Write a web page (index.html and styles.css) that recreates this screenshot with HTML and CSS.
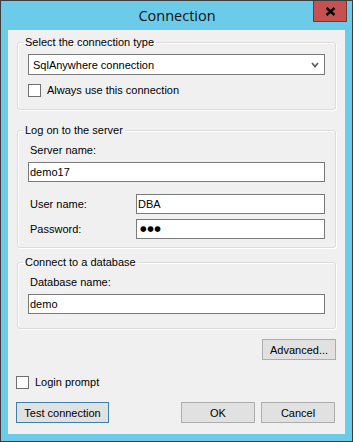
FILE: index.html
```html
<!DOCTYPE html>
<html>
<head>
<meta charset="utf-8">
<link rel="stylesheet" href="styles.css">
</head>
<body>
<div class="window">
  <div class="titlebar">
    <span></span>
    <div class="title">Connection</div>
    <div class="close"><svg width="11" height="9" viewBox="0 0 11 9"><path d="M1.5 1 L9.5 8 M9.5 1 L1.5 8" stroke="#000" stroke-width="2.4" fill="none"/></svg></div>
  </div>
  <div class="client">
    <fieldset class="group g1">
      <legend>Select the connection type</legend>
      <div class="combo">
        <span>SqlAnywhere connection</span>
        <svg class="chev" width="8" height="6" viewBox="0 0 8 6"><path d="M1 1 L4 4.5 L7 1" stroke="#606060" stroke-width="1.8" fill="none"/></svg>
      </div>
      <label class="check c1"><span class="box"></span>Always use this connection</label>
    </fieldset>

    <fieldset class="group g2">
      <legend>Log on to the server</legend>
      <div class="lbl">Server name:</div>
      <div class="text field">demo17</div>
      <div class="row r1"><span class="lbl">User name:</span><div class="text short">DBA</div></div>
      <div class="row r2"><span class="lbl">Password:</span><div class="text short pw">●●●</div></div>
    </fieldset>

    <fieldset class="group g3">
      <legend>Connect to a database</legend>
      <div class="lbl">Database name:</div>
      <div class="text field">demo</div>
    </fieldset>

    <div class="adv-row"><button class="btn">Advanced...</button></div>
    <label class="check c2"><span class="box"></span>Login prompt</label>
    <div class="btn-row">
      <button class="btn default">Test connection</button>
      <span class="spacer"></span>
      <button class="btn">OK</button>
      <button class="btn">Cancel</button>
    </div>
  </div>
</div>
</body>
</html>
```
FILE: styles.css
```css
* { box-sizing: border-box; }
html, body { margin: 0; padding: 0; }
body { font-family: "Liberation Sans", Arial, sans-serif; font-size: 11px; color: #000; }

.window {
  width: 353px;
  height: 442px;
  background: #6bcbe9;
  border: 1px solid #3d3d3d;
}
.titlebar {
  height: 29px;
  display: grid;
  grid-template-columns: 1fr auto 1fr;
  align-items: start;
}
.title {
  font-family: "Open Sans", "Liberation Sans", sans-serif;
  font-size: 14.5px;
  line-height: 29px;
  color: #111;
  padding-left: 1px;
}
.close {
  justify-self: end;
  margin-right: 5px;
  width: 34px;
  height: 21px;
  background: #c75050;
  border: 1px solid #6e3a3a;
  border-top: none;
  display: flex;
  align-items: center;
  justify-content: center;
}

.client {
  margin: 0 7px;
  height: 404px;
  background: #f0f0f0;
  padding: 5px 9px 0 9px;
}

.group {
  margin: 0;
  border: 1px solid #dcdcdc;
  border-radius: 3px;
  box-shadow: inset 1px 1px 0 #fff, 1px 1px 0 #fff;
  padding: 5px 10px 12px 10px;
  min-width: 0;
}
.group legend {
  padding: 0 2px;
  margin-left: -5px;
  line-height: 14px;
}
.g2 { margin-top: 13px; padding-top: 6px; padding-bottom: 8px; }
.g3 { margin-top: 7px; padding-top: 6px; padding-bottom: 14px; }

.combo {
  height: 21px;
  background: #fff;
  border: 1px solid #7a7a7a;
  display: flex;
  align-items: center;
  padding: 0 5px 0 4px;
}
.combo span { flex: 1; }

.check {
  display: flex;
  align-items: center;
  line-height: 14px;
}
.check .box {
  width: 13px;
  height: 13px;
  background: #fff;
  border: 1px solid #707070;
  margin-right: 6px;
}
.c1 { margin-top: 8px; }

.lbl { line-height: 14px; padding-left: 2px; }
.text {
  height: 20px;
  background: #fff;
  border: 1px solid #7a7a7a;
  line-height: 18px;
  padding-left: 1px;
}
.field { margin-top: 5px; }
.row { display: flex; align-items: center; }
.row .lbl { width: 108px; }
.row .short { flex: 1; }
.r1 { margin-top: 12px; }
.r2 { margin-top: 5px; }
.pw { font-family: "DejaVu Sans", sans-serif; font-size: 7.5px; letter-spacing: 0.6px; padding-left: 3px; }

.adv-row { display: flex; justify-content: flex-end; margin-top: 10px; }
.btn {
  font-family: "Liberation Sans", Arial, sans-serif;
  font-size: 11px;
  color: #000;
  background: #e1e1e1;
  border: 1px solid #adadad;
  height: 21px;
  width: 74px;
  padding: 0;
  margin: 0;
}
.btn.default { border-color: #3c7fb1; width: 93px; }
.c2 { margin-top: 15px; margin-left: -1px; }
.btn-row { display: flex; margin-top: 13px; margin-left: -1px; margin-right: 1px; gap: 6px; }
.btn-row .spacer { flex: 1; }
```
